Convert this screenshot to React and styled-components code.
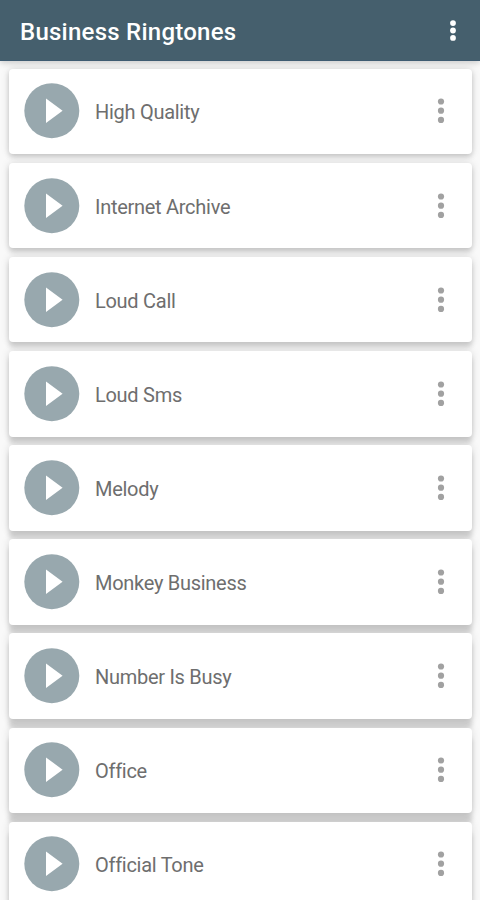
import React from 'react';
import styled, { createGlobalStyle } from 'styled-components';

const ringtones = [
    'High Quality',
    'Internet Archive',
    'Loud Call',
    'Loud Sms',
    'Melody',
    'Monkey Business',
    'Number Is Busy',
    'Office',
    'Official Tone',
];

//styling
const GlobalStyle = createGlobalStyle`
    body {
        margin: 0;
        background: #f9f9f9;
        font-family: Roboto, sans-serif;
    }
`

const Screen = styled.div`
    height: 900px;
    overflow: hidden;
    background: #f9f9f9;
`

const Toolbar = styled.header`
    position: relative;
    z-index: 1;
    display: flex;
    align-items: center;
    justify-content: space-between;
    box-sizing: border-box;
    height: 61px;
    padding: 3px 20px 0 20px;
    background: #455f6d;
    border-bottom: 1px solid #3f5c72;
    box-shadow: 0 2px 6px rgba(0, 0, 0, 0.18);
`

const Title = styled.h1`
    margin: 0;
    color: #fff;
    font-size: 24px;
    font-weight: 500;
    line-height: 30px;
    letter-spacing: 0.25px;
    white-space: nowrap;
`

const List = styled.ul`
    display: flex;
    flex-direction: column;
    gap: 8.6px;
    margin: 0;
    padding: 7.6px 8px 0 9px;
    list-style: none;
`

//shadows get longer further down the screen
const Card = styled.li`
    display: flex;
    align-items: center;
    flex: none;
    box-sizing: border-box;
    height: 85.55px;
    padding: 0 24px 0 15px;
    border-radius: 4px;
    background: #fff;
    box-shadow:
        0 ${pr => 3 + pr.$depth}px 5px rgba(0, 0, 0, ${pr => 0.15 + pr.$depth * 0.002}),
        0 0 9px rgba(0, 0, 0, 0.13);
`

const PlayButton = styled.button`
    flex: none;
    width: 56px;
    height: 56px;
    margin: 0 15px 0 0;
    padding: 0;
    border: 0;
    background: none;

    svg {
        display: block;
    }
`

const Name = styled.span`
    flex: 1;
    padding-top: 2px;
    color: #6e6e6e;
    font-size: 20px;
    line-height: 26px;
    letter-spacing: -0.28px;
    white-space: nowrap;
`

const MenuButton = styled.button`
    padding: 0;
    border: 0;
    background: none;
    color: ${pr => pr.$color};

    svg {
        display: block;
    }
`


//********************************************* */
function Dots({ step, radius, top }) {
    return (
        <svg width="14" height="28" viewBox={`-7 ${-14 + top} 14 28`} fill="currentColor">
            <circle cx="0" cy={-step} r={radius} />
            <circle cx="0" cy="0" r={radius} />
            <circle cx="0" cy={step} r={radius} />
        </svg>
    )
}

function Ringtone(props) {
    const { name, depth } = props;

    return (
        <Card $depth={depth}>
            <PlayButton aria-label="Play">
                <svg width="56" height="56" viewBox="0 0 56 56">
                    <circle cx="27.8" cy="27.7" r="27.5" fill="#98a8ae" />
                    <path d="M22 15.4V40L38.6 27.7Z" fill="#fff" />
                </svg>
            </PlayButton>
            <Name>{name}</Name>
            <MenuButton $color="#a1a1a1" aria-label="Options">
                <Dots step={9.2} radius={3.1} top={0.3} />
            </MenuButton>
        </Card>
    )
}

function App() {
    return (
        <Screen>
            <GlobalStyle />
            <Toolbar>
                <Title>Business Ringtones</Title>
                <MenuButton $color="#fff" aria-label="More">
                    <Dots step={7.4} radius={2.9} top={1.5} />
                </MenuButton>
            </Toolbar>
            <List>
                {ringtones.map((name, i) => (
                    <Ringtone key={name} name={name} depth={i} />
                ))}
            </List>
        </Screen>
    )
}


export default App;
